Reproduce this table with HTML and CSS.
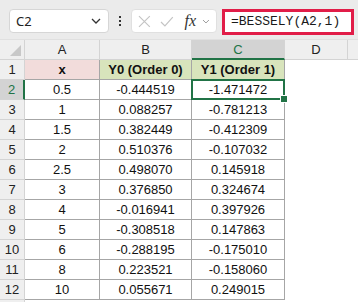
FILE: index.html
```html
<!DOCTYPE html>
<html>
<head>
<meta charset="utf-8">
<link rel="stylesheet" href="styles.css">
</head>
<body>
<div class="toolbar">
  <div class="namebox">
    <span class="cellref">C2</span>
    <svg class="chev" width="10" height="6" viewBox="0 0 10 6"><path d="M1 1 L5 5 L9 1" fill="none" stroke="#333" stroke-width="1.3"/></svg>
  </div>
  <div class="dots"><i></i><i></i><i></i></div>
  <div class="fxbox">
    <svg class="ico" width="13" height="13" viewBox="0 0 13 13"><path d="M1 1 L12 12 M12 1 L1 12" stroke="#c4c4c4" stroke-width="1.2" fill="none"/></svg>
    <svg class="ico" width="14" height="11" viewBox="0 0 14 11"><path d="M1 6 L5 10 L13 1" stroke="#c4c4c4" stroke-width="1.2" fill="none"/></svg>
    <span class="fx">fx</span>
    <svg class="chev small" width="8" height="5" viewBox="0 0 8 5"><path d="M1 1 L4 4 L7 1" fill="none" stroke="#999" stroke-width="1"/></svg>
  </div>
  <div class="formula">=BESSELY(A2,1)</div>
</div>
<div class="sheet">
  <div class="hd corner"><span class="tri"></span></div>
  <div class="hd col">A</div>
  <div class="hd col">B</div>
  <div class="hd col sel">C</div>
  <div class="hd col">D</div>
  <div class="hd col rest"></div>

  <div class="hd row">1</div>
  <div class="c th pink">x</div>
  <div class="c th green">Y0 (Order 0)</div>
  <div class="c th green">Y1 (Order 1)</div>
  <div class="e"></div><div class="e"></div>

  <div class="hd row sel">2</div>
  <div class="c">0.5</div><div class="c">-0.444519</div><div class="c active">-1.471472</div>
  <div class="e"></div><div class="e"></div>

  <div class="hd row">3</div>
  <div class="c">1</div><div class="c">0.088257</div><div class="c">-0.781213</div>
  <div class="e"></div><div class="e"></div>

  <div class="hd row">4</div>
  <div class="c">1.5</div><div class="c">0.382449</div><div class="c">-0.412309</div>
  <div class="e"></div><div class="e"></div>

  <div class="hd row">5</div>
  <div class="c">2</div><div class="c">0.510376</div><div class="c">-0.107032</div>
  <div class="e"></div><div class="e"></div>

  <div class="hd row">6</div>
  <div class="c">2.5</div><div class="c">0.498070</div><div class="c">0.145918</div>
  <div class="e"></div><div class="e"></div>

  <div class="hd row">7</div>
  <div class="c">3</div><div class="c">0.376850</div><div class="c">0.324674</div>
  <div class="e"></div><div class="e"></div>

  <div class="hd row">8</div>
  <div class="c">4</div><div class="c">-0.016941</div><div class="c">0.397926</div>
  <div class="e"></div><div class="e"></div>

  <div class="hd row">9</div>
  <div class="c">5</div><div class="c">-0.308518</div><div class="c">0.147863</div>
  <div class="e"></div><div class="e"></div>

  <div class="hd row">10</div>
  <div class="c">6</div><div class="c">-0.288195</div><div class="c">-0.175010</div>
  <div class="e"></div><div class="e"></div>

  <div class="hd row">11</div>
  <div class="c">8</div><div class="c">0.223521</div><div class="c">-0.158060</div>
  <div class="e"></div><div class="e"></div>

  <div class="hd row">12</div>
  <div class="c">10</div><div class="c">0.055671</div><div class="c">0.249015</div>
  <div class="e"></div><div class="e"></div>

  <div class="hd row tail"></div>
  <div class="e"></div><div class="e"></div><div class="e"></div><div class="e"></div><div class="e"></div>
</div>
</body>
</html>
```
FILE: styles.css
```css
* { box-sizing: border-box; }
html, body { margin: 0; padding: 0; background: #fff; overflow: hidden; }
body { width: 358px; height: 302px; font-family: "Liberation Sans", Arial, sans-serif; }

.toolbar {
  height: 40px;
  background: #ebebeb;
  display: flex;
  align-items: flex-start;
  padding: 9px 0 0 9px;
  border-bottom: 1px solid #e0e0e0;
}
.namebox {
  width: 100px;
  height: 24px;
  background: #fff;
  border: 1px solid #d6d6d6;
  border-radius: 4px;
  display: flex;
  align-items: center;
  justify-content: space-between;
  padding: 0 7px 0 6px;
  font-family: "Noto Sans", "Open Sans", sans-serif;
  font-size: 13px;
  color: #222;
}
.chev { display: block; }
.dots {
  width: 22px;
  height: 24px;
  display: flex;
  flex-direction: column;
  align-items: center;
  justify-content: center;
  gap: 2px;
}
.dots i { width: 2px; height: 2px; background: #333; display: block; }
.fxbox {
  width: 86px;
  height: 24px;
  background: #fff;
  border: 1px solid #e0e0e0;
  border-radius: 4px;
  display: flex;
  align-items: center;
  padding: 0 6px 0 6px;
  gap: 0;
}
.fxbox .ico { margin-right: 9px; }
.fx {
  font-family: "Liberation Serif", "Times New Roman", serif;
  font-style: italic;
  font-size: 16px;
  color: #333;
  margin-left: 2px;
  margin-right: 6px;
  line-height: 1;
}
.formula {
  margin-left: 5px;
  width: 132px;
  height: 26px;
  background: #fff;
  border: 3px solid #e11d48;
  font-family: "Liberation Mono", "Courier New", monospace;
  font-size: 13px;
  color: #1a1a1a;
  padding-left: 6px;
  line-height: 20px;
  white-space: nowrap;
}

.sheet {
  display: grid;
  grid-template-columns: 25px 75px 92px 93px 63px 1fr;
  grid-template-rows: repeat(13, 20px) 2px;
  height: 262px;
  overflow: hidden;
  font-size: 13px;
  color: #111;
}
.hd {
  background: #efefef;
  border-right: 1px solid #d4d4d4;
  border-bottom: 1px solid #d4d4d4;
  display: flex;
  align-items: center;
  justify-content: center;
  color: #222;
}
.hd.tail { border-bottom: none; }
.corner { position: relative; }
.tri {
  position: absolute;
  right: 3px;
  bottom: 3px;
  width: 11px;
  height: 11px;
  background: #c8c8c8;
  clip-path: polygon(100% 0, 100% 100%, 0 100%);
}
.col.rest { border-right: none; }
.hd.col.sel {
  background: #d3d3d3;
  color: #217346;
  border-bottom: 2px solid #217346;
}
.hd.row.sel {
  background: #d3d3d3;
  color: #217346;
  border-right: 2px solid #217346;
}
.c {
  border-right: 1px solid #a6a6a6;
  border-bottom: 1px solid #a6a6a6;
  display: flex;
  align-items: center;
  justify-content: center;
  white-space: nowrap;
}
.th { font-weight: bold; }
.pink { background: #f2dcdb; }
.green { background: #d8e4bc; }
.e { background: #fff; }
.active { position: relative; }
.active::after {
  content: "";
  position: absolute;
  left: -1px;
  top: -1px;
  right: -1px;
  bottom: -1px;
  border: 2px solid #217346;
}
.active::before {
  content: "";
  position: absolute;
  right: -4px;
  bottom: -4px;
  width: 6px;
  height: 6px;
  background: #217346;
  border: 1px solid #fff;
  z-index: 1;
}
```
